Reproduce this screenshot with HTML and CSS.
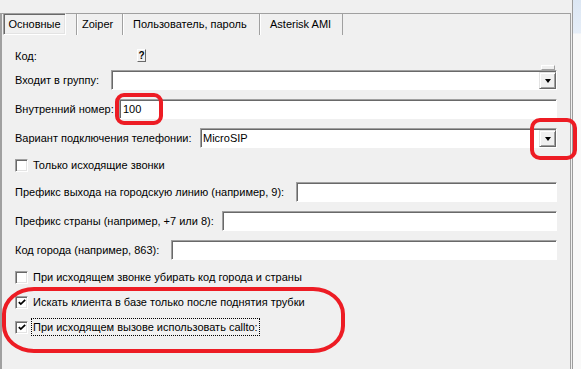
FILE: index.html
```html
<!DOCTYPE html>
<html lang="ru">
<head>
  <meta charset="UTF-8" />
  <title>Настройки телефонии</title>
  <link rel="stylesheet" href="styles.css">
</head>
<body>
  <div class="window">
    <div class="panel">
      <div class="tabs">
        <div class="tab tab-active">Основные</div>
        <div class="tab tab-zoiper">Zoiper</div>
        <div class="tab tab-user">Пользователь, пароль</div>
        <div class="tab tab-ami">Asterisk AMI</div>
      </div>

      <div class="form">
        <div class="row row-code">
          <span class="label label-code">Код:</span>
          <span class="help-btn">?</span>
        </div>

        <div class="row">
          <span class="label w-group">Входит в группу:</span>
          <div class="combo">
            <span class="combo-value"></span>
            <span class="drop-btn"><i class="arrow"></i></span>
            <span class="stub"></span>
          </div>
        </div>

        <div class="row">
          <span class="label w-number">Внутренний номер:</span>
          <div class="field">100</div>
        </div>

        <div class="row">
          <span class="label w-variant">Вариант подключения телефонии:</span>
          <div class="combo">
            <span class="combo-value">MicroSIP</span>
            <span class="drop-btn"><i class="arrow"></i></span>
          </div>
        </div>

        <div class="row row-check">
          <span class="checkbox"></span>
          <span class="check-label">Только исходящие звонки</span>
        </div>

        <div class="row">
          <span class="label w-line">Префикс выхода на городскую линию (например, 9):</span>
          <div class="field"></div>
        </div>

        <div class="row">
          <span class="label w-country">Префикс страны (например, +7 или 8):</span>
          <div class="field"></div>
        </div>

        <div class="row">
          <span class="label w-city">Код города (например, 863):</span>
          <div class="field"></div>
        </div>

        <div class="row row-check">
          <span class="checkbox"></span>
          <span class="check-label">При исходящем звонке убирать код города и страны</span>
        </div>

        <div class="row row-check">
          <span class="checkbox">
            <svg viewBox="0 0 11 11" width="11" height="11"><path d="M2 5 L4.2 7.3 L9 2.5" fill="none" stroke="#000" stroke-width="1.9"/></svg>
          </span>
          <span class="check-label">Искать клиента в базе только после поднятия трубки</span>
        </div>

        <div class="row row-check">
          <span class="checkbox">
            <svg viewBox="0 0 11 11" width="11" height="11"><path d="M2 5 L4.2 7.3 L9 2.5" fill="none" stroke="#000" stroke-width="1.9"/></svg>
          </span>
          <span class="check-label focused">При исходящем вызове использовать callto:</span>
        </div>
      </div>
    </div>
    <div class="side"></div>
  </div>

  <!-- red hand-drawn highlights -->
  <div class="mark mark-number"></div>
  <div class="mark mark-drop"></div>
  <div class="mark mark-checks"></div>
</body>
</html>
```

FILE: styles.css
```css
:root {
  --face: #f0f0f0;
  --shadow: #a0a0a0;
  --dark: #696969;
  --light: #e3e3e3;
  --red: #ed1c24;
}

* {
  margin: 0;
  padding: 0;
  box-sizing: border-box;
}

body {
  font-family: "Liberation Sans", Arial, sans-serif;
  font-size: 11px;
  color: #000;
  background: var(--face);
  height: 369px;
  overflow: hidden;
  position: relative;
}

.window {
  display: flex;
  height: 100%;
}

/* Tab control frame */
.panel {
  width: 571px;
  margin-top: 13px;
  border-top: 1px solid var(--shadow);
  border-left: 2px solid var(--shadow);
  border-right: 1px solid var(--shadow);
}

.side {
  width: 9px;
  margin-left: 1px;
  border-left: 1px solid #9c9c9c;
  background: linear-gradient(180deg, #dce7f4 0, #e6eef8 33px, #f9f9f9 34px, #f9f9f9 100%);
}

.tabs {
  display: flex;
  height: 21px;
  padding-left: 1px;
}

.tab {
  height: 21px;
  line-height: 20px;
  white-space: nowrap;
  border-left: 1px solid var(--shadow);
  box-shadow: inset 1px 0 0 #fff;
}

.tab-active {
  width: 63px;
  margin-top: -1px;
  height: 22px;
  text-align: center;
  border: 1px solid;
  border-color: var(--shadow) #fff #fff var(--shadow);
  box-shadow: inset 1px 1px 0 var(--dark), inset -1px -1px 0 var(--light);
  line-height: 20px;
  margin-right: 10px;
}

.tab-zoiper { width: 46px; padding-left: 5px; }
.tab-user { width: 137px; padding-left: 10px; }
.tab-ami {
  width: 84px;
  padding-left: 10px;
  border-right: 1px solid var(--shadow);
}

/* Form */
.form {
  display: flex;
  flex-direction: column;
  gap: 9px;
  padding: 15px 13px 0 13px;
}

.row {
  display: flex;
  align-items: center;
  height: 20px;
  gap: 9px;
}

.row-code {
  height: 11px;
  gap: 0;
}

.label {
  flex: none;
  white-space: nowrap;
}

.label-code { width: 122px; }
.w-group { width: 87px; }
.w-number { width: 95px; }
.w-variant { width: 176px; }
.w-line { width: 272px; }
.w-country { width: 198px; }
.w-city { width: 147px; }

.help-btn {
  width: 9px;
  height: 13px;
  margin-top: -1px;
  font-size: 10px;
  font-weight: bold;
  line-height: 11px;
  text-align: center;
  background: var(--face);
  border: 1px solid;
  border-color: #fff var(--dark) var(--dark) #fff;
}

.field,
.combo {
  flex: 1;
  height: 20px;
  background: #fff;
  border: 1px solid;
  border-color: var(--shadow) #fff #fff var(--shadow);
  box-shadow: inset 1px 1px 0 var(--dark);
}

.field {
  padding-left: 3px;
  line-height: 18px;
}

.combo {
  display: flex;
  position: relative;
  padding: 1px 0 0 2px;
}

.combo-value {
  flex: 1;
  line-height: 17px;
}

.drop-btn {
  width: 17px;
  height: 17px;
  display: flex;
  align-items: center;
  justify-content: center;
  background: var(--face);
  border: 1px solid;
  border-color: var(--light) var(--dark) var(--dark) var(--light);
  box-shadow: inset 1px 1px 0 #fff, inset -1px -1px 0 var(--shadow);
}

.arrow {
  width: 1px;
  height: 0;
  margin-top: 1px;
  border-left: 3px solid transparent;
  border-right: 3px solid transparent;
  border-top: 4px solid #000;
}

/* edge of a button hidden behind the group combo */
.stub {
  position: absolute;
  right: 1px;
  top: -6px;
  width: 14px;
  height: 5px;
  background: var(--face);
  border: 1px solid;
  border-color: #fff var(--shadow) var(--shadow) #fff;
}

.row-check {
  height: 16px;
  gap: 4px;
}

.checkbox {
  width: 13px;
  height: 13px;
  display: flex;
  align-items: center;
  justify-content: center;
  background: #fff;
  border: 1px solid;
  border-color: var(--shadow) #fff #fff var(--shadow);
  box-shadow: inset 1px 1px 0 var(--dark), inset -1px -1px 0 var(--light);
}

.checkbox svg {
  margin: 1px 0 0 1px;
}

.check-label {
  padding: 1px 1px;
  line-height: 14px;
  white-space: nowrap;
}

.focused {
  outline: 1px dotted #000;
}

/* Annotations */
.mark {
  position: absolute;
  border: 4px solid var(--red);
}

.mark-number {
  left: 115px;
  top: 93px;
  width: 48px;
  height: 32px;
  border-radius: 9px;
}

.mark-drop {
  left: 530px;
  top: 118px;
  width: 47px;
  height: 42px;
  border-radius: 10px;
}

.mark-checks {
  left: 2px;
  top: 287px;
  width: 343px;
  height: 66px;
  border-radius: 32px / 27px;
}
```
